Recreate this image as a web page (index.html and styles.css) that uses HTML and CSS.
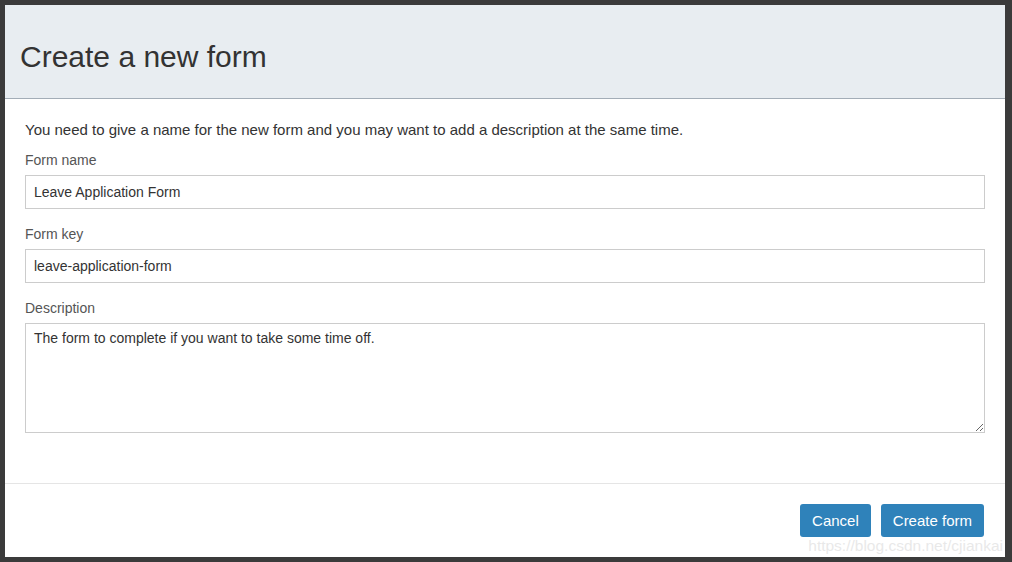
FILE: index.html
```html
<!DOCTYPE html>
<html lang="en">

<head>
    <meta charset="UTF-8">
    <title>Create a new form</title>
    <link rel="stylesheet" href="styles.css">
</head>

<body>
    <div class="modal">
        <div class="modal-header">
            <h1 class="modal-title">Create a new form</h1>
        </div>

        <div class="modal-body">
            <p class="intro">You need to give a name for the new form and you may want to add a description at the same time.</p>

            <div class="form-group">
                <label for="formName">Form name</label>
                <input type="text" id="formName" class="form-control" value="Leave Application Form">
            </div>

            <div class="form-group">
                <label for="formKey">Form key</label>
                <input type="text" id="formKey" class="form-control" value="leave-application-form">
            </div>

            <div class="form-group">
                <label for="formDesc">Description</label>
                <textarea id="formDesc" class="form-control desc">The form to complete if you want to take some time off.</textarea>
            </div>
        </div>

        <div class="modal-footer">
            <button class="btn">Cancel</button>
            <button class="btn">Create form</button>
        </div>

        <div class="watermark">https://blog.csdn.net/cjiankai</div>
    </div>
</body>

</html>
```

FILE: styles.css
```css
* {
    box-sizing: border-box;
    margin: 0;
    padding: 0;
}

body {
    background: #3b3b3b;
    padding: 5px 7px 5px 5px;
    font-family: 'Liberation Sans', Arial, sans-serif;
    color: #333;
}

.modal {
    position: relative;
    width: 1000px;
    height: 552px;
    background: #fff;
    display: flex;
    flex-direction: column;
}

.modal-header {
    height: 94px;
    background: #e8edf1;
    border-bottom: 1px solid #a3adb7;
    padding: 0 15px;
    display: flex;
    align-items: center;
}

.modal-title {
    font-size: 30px;
    font-weight: 400;
    color: #333;
    padding-top: 11px;
}

.modal-body {
    padding: 21px 20px 0;
    flex: 1;
}

.intro {
    font-size: 15px;
    line-height: 20px;
    margin-bottom: 10px;
}

.form-group {
    margin-bottom: 15px;
}

.form-group label {
    display: block;
    font-size: 14px;
    line-height: 20px;
    color: #555;
    margin-bottom: 5px;
}

.form-control {
    display: block;
    width: 100%;
    height: 34px;
    border: 1px solid #ccc;
    padding: 0 8px;
    font-family: inherit;
    font-size: 14px;
    color: #333;
    background: #fff;
    outline: none;
}

.desc {
    height: 110px;
    padding: 4px 8px;
    line-height: 20px;
    resize: both;
}

.modal-footer {
    border-top: 1px solid #e5e5e5;
    padding: 20px 21px 20px;
    display: flex;
    justify-content: flex-end;
    gap: 10px;
}

.btn {
    height: 33px;
    padding: 0 12px;
    border: none;
    border-radius: 3px;
    background: #2f82ba;
    color: #fff;
    font-family: inherit;
    font-size: 15px;
    cursor: pointer;
}

.watermark {
    position: absolute;
    right: 2px;
    bottom: 2px;
    font-size: 15.5px;
    color: rgba(225, 225, 225, 0.75);
}
```
